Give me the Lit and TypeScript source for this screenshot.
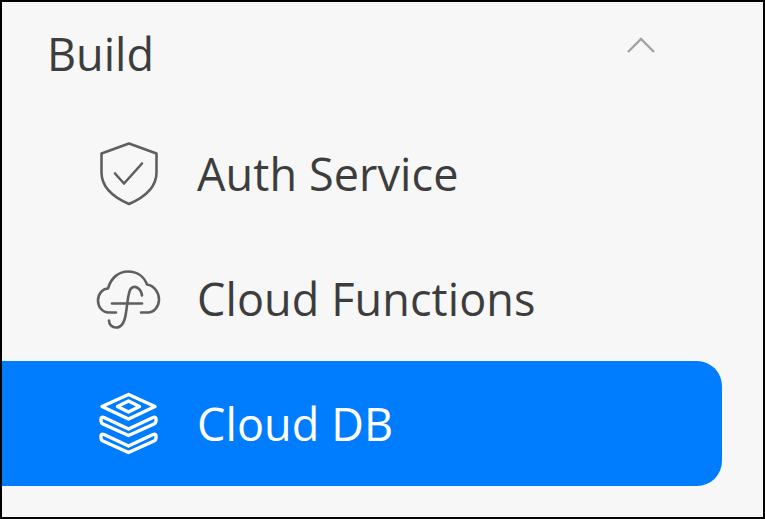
import { LitElement, html, css } from "lit";
import { customElement } from "lit/decorators.js";

@customElement("app-root")
export class AppRoot extends LitElement {
  static styles = css`
    :host { display: block; }
    .frame {
      box-sizing: border-box; width: 765px; height: 519px;
      border: 2px solid #000; background: #f7f7f7;
      font-family: "Open Sans", "Noto Sans", sans-serif; color: #3d3d3d;
      display: flex; flex-direction: column;
    }
    .head {
      height: 109px; box-sizing: border-box; flex: none;
      display: flex; align-items: center; justify-content: space-between;
      padding: 0 107px 6px 45px; font-size: 45px;
    }
    .chev { width: 30px; height: 18px; display: block; margin-bottom: 15px; }
    .item {
      height: 125px; flex: none; width: 720px; box-sizing: border-box;
      display: flex; align-items: center; gap: 35px; padding-left: 92px;
      font-size: 45px; letter-spacing: 0.1px; border-radius: 0 25px 25px 0;
    }
    .item.active { background: #007dff; color: #fff; }
    .icon { width: 68px; height: 68px; flex: none; display: block; fill: none; stroke: currentColor; stroke-linecap: round; stroke-linejoin: round; }
    .muted { color: #5f5f5f; }
  `;
  render() {
    return html`<div class="frame">
      <div class="head"><span>Build</span>
        <svg class="chev" viewBox="0 0 30 18" fill="none" stroke="#a3a3a3" stroke-width="2.4"><path d="M2 15 L15 2 L28 15"/></svg>
      </div>
      <div class="item">
        <svg class="icon muted" viewBox="94 139.5 68 68" stroke-width="2.6"><path d="M129 143 L101.500 153 V172 C101.500 187 114 197 129 203.500 C144 197 156.500 187 156.500 172 V153 Z"/><path d="M115 173 L124 183 L142 163"/></svg>
        <span>Auth Service</span>
      </div>
      <div class="item">
        <svg class="icon muted" viewBox="94 264.5 68 68" stroke-width="2.6"><path d="M116 312 H109 C102 312 98 306 98 300 C98 293 103 288 108 288 C111 277 119 271 128 271 C137 271 144 276 147 284 C154 285 159 292 159 299 C159 306 154 312 148 312 H141"/><path d="M112 303 H142"/><path d="M142 295 C141 288 135 284 131 288 C128 291 128 300 126 312 C125 320 122 327 116 327 C112 327 109 324 109 320"/></svg>
        <span>Cloud Functions</span>
      </div>
      <div class="item active">
        <svg class="icon" viewBox="94 389.5 68 68" stroke-width="3.400"><path d="M128.500 394 L155 406 L128.500 418.500 L102 406 Z"/><path d="M128.500 400.500 L139.500 406 L128.500 411.500 L117.500 406 Z"/><path d="M104 417 L128.500 428.500 L153 417 Q156 416 156 419 V420.500 Q156 422.500 154 423.500 L128.500 435 L103 423.500 Q101 422.500 101 420.500 V419 Q101 416 104 417 Z"/><path d="M104 434 L128.500 445.500 L153 434 Q156 433 156 436 V437.500 Q156 439.500 154 440.500 L128.500 452 L103 440.500 Q101 439.500 101 437.500 V436 Q101 433 104 434 Z"/></svg>
        <span>Cloud DB</span>
      </div>
    </div>`;
  }
}
